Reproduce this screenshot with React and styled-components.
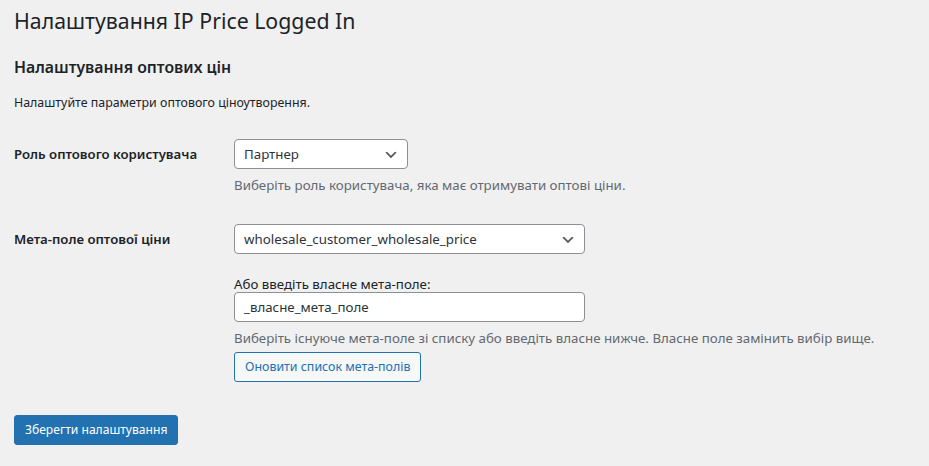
import { createGlobalStyle } from 'styled-components';
import styled from 'styled-components';

const GlobalStyle = createGlobalStyle`
  html, body {
    margin: 0;
    background: #f0f0f1;
    color: #1d2327;
    font-family: "Noto Sans", "Open Sans", sans-serif;
    font-size: 12.4px;
    line-height: 1.4em;
  }
`;

const chevron =
  "url(\"data:image/svg+xml;charset=US-ASCII,%3Csvg%20width%3D%2220%22%20height%3D%2220%22%20xmlns%3D%22http%3A%2F%2Fwww.w3.org%2F2000%2Fsvg%22%3E%3Cpath%20d%3D%22M5%206l5%205%205-5%202%201-7%207-7-7%202-1z%22%20fill%3D%22%23555%22%2F%3E%3C%2Fsvg%3E\")";

const Wrap = styled.div`
  padding: 0 20px 0 14px;
`;

const Title = styled.h1`
  font-size: 21.3px;
  font-weight: 400;
  line-height: 30px;
  margin: 0;
  padding: 6px 0 4px;
`;

const SectionTitle = styled.h2`
  font-size: 15.8px;
  font-weight: 600;
  margin: 16px 0 0;
  line-height: 22px;
`;

const Intro = styled.p`
  margin: 15px 0 0;
  font-size: 12.4px;
  line-height: 19px;
`;

const FormTable = styled.div`
  display: flex;
  flex-direction: column;
  margin-top: 12px;
`;

const Row = styled.div`
  display: grid;
  grid-template-columns: 220px 1fr;
`;

const Label = styled.div`
  padding: 21px 10px 20px 0;
  font-size: 13.2px;
  font-weight: 600;
  line-height: 18px;
`;

const Cell = styled.div`
  padding: 15px 0 ${(p) => p.$bottom ?? 15}px;
  display: flex;
  flex-direction: column;
  align-items: flex-start;
`;

const Select = styled.select`
  appearance: none;
  width: ${(p) => p.$width}px;
  height: 30px;
  box-sizing: border-box;
  border: 1px solid #8c8f94;
  border-radius: 4px;
  background: #fff ${chevron} no-repeat right 8px top 55%;
  background-size: 16px 16px;
  color: #2c3338;
  font-family: inherit;
  font-size: 13.3px;
  padding: 0 24px 0 9px;
  margin: 0;
`;

const Input = styled.input`
  width: ${(p) => p.$width}px;
  height: 30px;
  box-sizing: border-box;
  border: 1px solid #8c8f94;
  border-radius: 4px;
  background: #fff;
  color: #2c3338;
  font-family: inherit;
  font-size: 13.3px;
  padding: 0 9px;
  margin: 0;
`;

const FieldLabel = styled.label`
  font-size: 13.3px;
  line-height: 16px;
  margin-top: ${(p) => p.$top || 0}px;
  color: #1d2327;
`;

const Description = styled.p`
  margin: 6px 0 0;
  color: #646970;
  font-size: 13.3px;
  line-height: 20px;
`;

const Button = styled.button`
  font-family: inherit;
  font-size: ${(p) => (p.$primary ? 12.1 : 12.4)}px;
  height: 30px;
  line-height: 28px;
  padding: 0 10px;
  border-radius: 3px;
  border: 1px solid #2271b1;
  cursor: pointer;
  background: ${(p) => (p.$primary ? '#2271b1' : '#f6f7f7')};
  color: ${(p) => (p.$primary ? '#fff' : '#2271b1')};
  margin-top: ${(p) => p.$top || 0}px;
`;

const Submit = styled.div`
  padding: 19px 0 30px;
`;

function App() {
  return (
    <Wrap>
      <GlobalStyle />
      <Title>Налаштування IP Price Logged In</Title>
      <SectionTitle>Налаштування оптових цін</SectionTitle>
      <Intro>Налаштуйте параметри оптового ціноутворення.</Intro>
      <FormTable>
        <Row>
          <Label>Роль оптового користувача</Label>
          <Cell $bottom={14}>
            <Select $width={174} defaultValue="partner">
              <option value="partner">Партнер</option>
            </Select>
            <Description>Виберіть роль користувача, яка має отримувати оптові ціни.</Description>
          </Cell>
        </Row>
        <Row>
          <Label>Мета-поле оптової ціни</Label>
          <Cell $bottom={14}>
            <Select $width={351} defaultValue="w">
              <option value="w">wholesale_customer_wholesale_price</option>
            </Select>
            <FieldLabel $top={22}>Або введіть власне мета-поле:</FieldLabel>
            <Input $width={351} defaultValue="_власне_мета_поле" />
            <Description>
              Виберіть існуюче мета-поле зі списку або введіть власне нижче. Власне поле замінить вибір вище.
            </Description>
            <Button $top={4}>Оновити список мета-полів</Button>
          </Cell>
        </Row>
      </FormTable>
      <Submit>
        <Button $primary>Зберегти налаштування</Button>
      </Submit>
    </Wrap>
  );
}

export default App;
